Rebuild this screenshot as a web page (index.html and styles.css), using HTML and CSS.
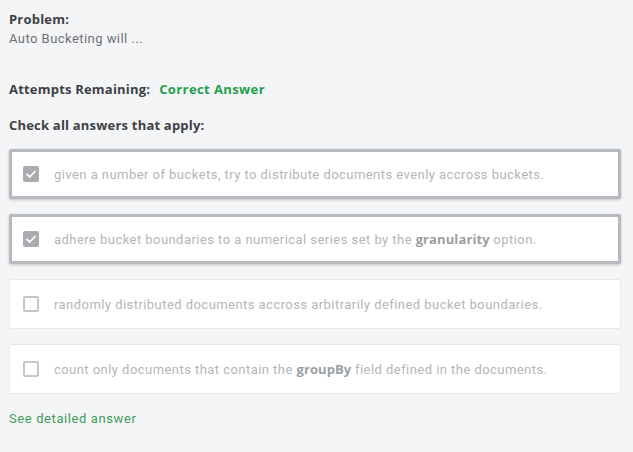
FILE: index.html
```html
<!DOCTYPE html>
<html>
<head>
<meta charset="utf-8">
<link rel="stylesheet" href="styles.css">
</head>
<body>
<div class="page">
  <div class="problem">
    <div class="label">Problem:</div>
    <div class="desc">Auto Bucketing will ...</div>
  </div>
  <div class="attempts"><span class="label">Attempts Remaining:</span><span class="correct">Correct Answer</span></div>
  <div class="label check">Check all answers that apply:</div>
  <div class="options">
    <div class="option selected"><span class="box checked"><svg viewBox="0 0 16 16" width="16" height="16"><path d="M4 8.3l2.7 2.7L12 5.5" fill="none" stroke="#fff" stroke-width="1.8" stroke-linecap="round" stroke-linejoin="round"/></svg></span><span class="text">given a number of buckets, try to distribute documents evenly accross buckets.</span></div>
    <div class="option selected"><span class="box checked"><svg viewBox="0 0 16 16" width="16" height="16"><path d="M4 8.3l2.7 2.7L12 5.5" fill="none" stroke="#fff" stroke-width="1.8" stroke-linecap="round" stroke-linejoin="round"/></svg></span><span class="text">adhere bucket boundaries to a numerical series set by the <b>granularity</b> option.</span></div>
    <div class="option"><span class="box"></span><span class="text">randomly distributed documents accross arbitrarily defined bucket boundaries.</span></div>
    <div class="option"><span class="box"></span><span class="text">count only documents that contain the <b>groupBy</b> field defined in the documents.</span></div>
  </div>
  <div class="detail">See detailed answer</div>
</div>
</body>
</html>
```
FILE: styles.css
```css
html, body {
  margin: 0;
  padding: 0;
  background: #f4f5f7;
}
body {
  font-family: Roboto, "Liberation Sans", sans-serif;
  font-size: 13px;
  color: #3d4146;
}
.page {
  padding: 10px 12px 0 9px;
}
.label {
  font-family: "Open Sans", Roboto, sans-serif;
  font-weight: 700;
  color: #3d4146;
  letter-spacing: 0.2px;
}
.problem .label {
  line-height: 18px;
}
.desc {
  color: #6d7177;
  line-height: 18px;
  margin-top: 2px;
  letter-spacing: 0.45px;
}
.attempts {
  margin-top: 32px;
  display: flex;
  gap: 9px;
  line-height: 18px;
}
.correct {
  font-family: "Open Sans", Roboto, sans-serif;
  color: #22a04f;
  font-weight: 700;
  letter-spacing: 0.4px;
}
.check {
  margin-top: 18px;
  line-height: 18px;
}
.options {
  margin-top: 15px;
  display: flex;
  flex-direction: column;
  gap: 15px;
}
.option {
  background: #fff;
  border: 1px solid #e6e8eb;
  border-radius: 2px;
  height: 50px;
  box-sizing: border-box;
  display: flex;
  align-items: center;
  padding-left: 13px;
  gap: 15px;
}
.option.selected {
  border: 3px solid #b6babe;
  padding-left: 11px;
  box-shadow: 0 1px 3px rgba(0,0,0,0.2);
}
.box {
  width: 16px;
  height: 16px;
  box-sizing: border-box;
  border: 2px solid #c3c6ca;
  border-radius: 2px;
  flex: none;
  display: flex;
}
.box.checked {
  border: none;
  background: #a9adb2;
}
.text {
  color: #b3b6ba;
  letter-spacing: 0.45px;
}
.text b {
  font-family: "Open Sans", Roboto, sans-serif;
  color: #9a9ea3;
  letter-spacing: 0.1px;
}
.detail {
  margin-top: 17px;
  color: #3f9c5c;
  letter-spacing: 0.6px;
}
```
